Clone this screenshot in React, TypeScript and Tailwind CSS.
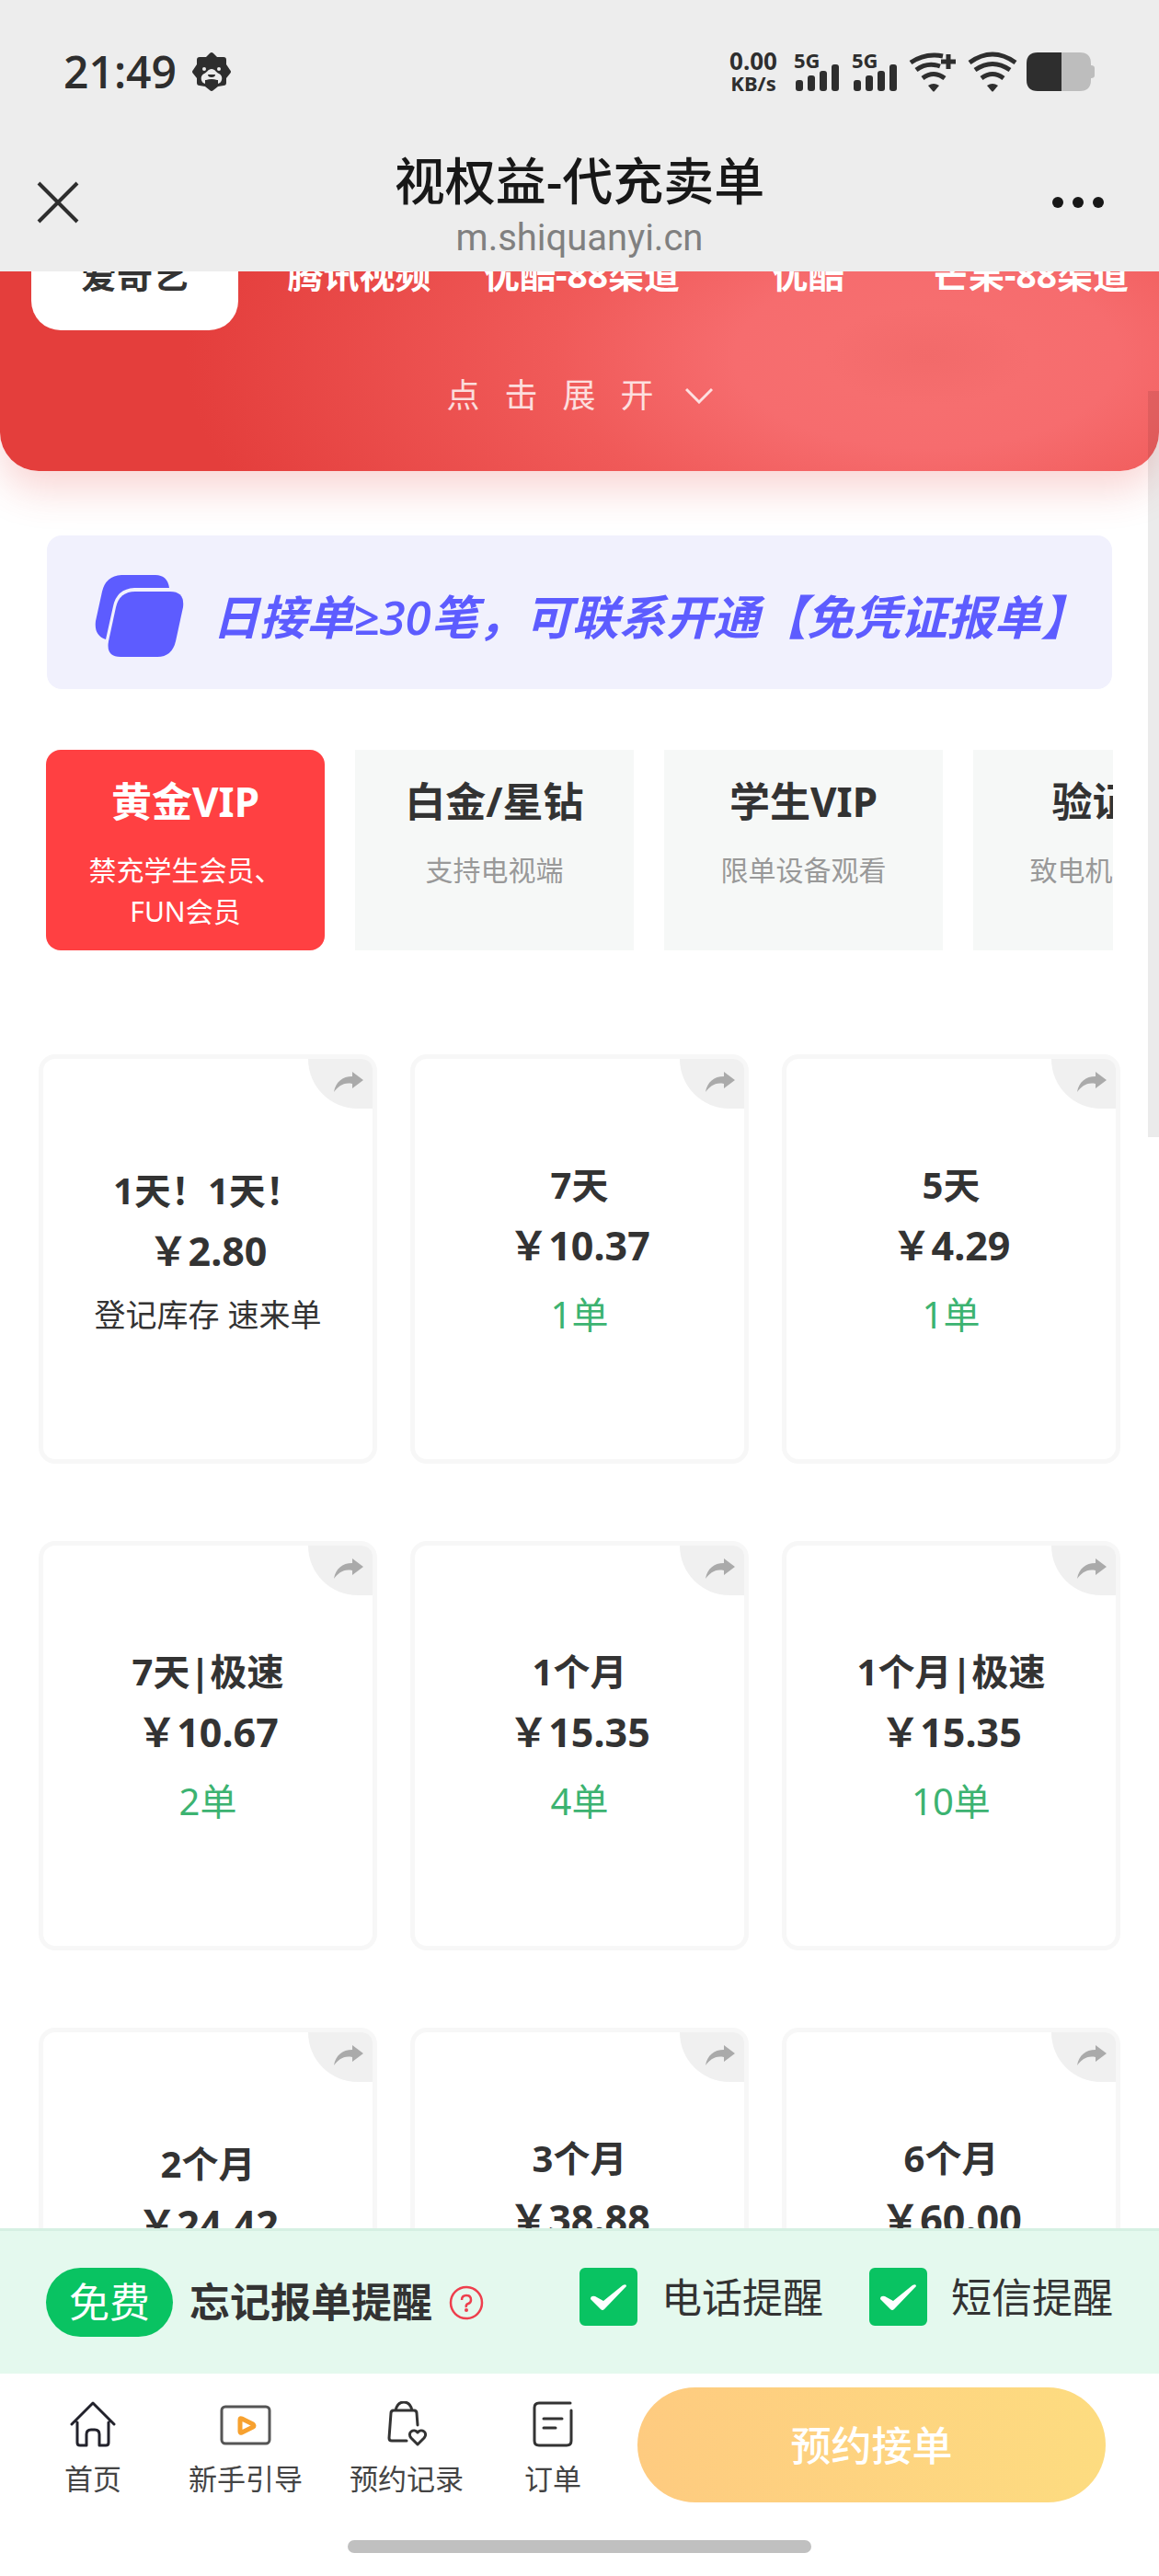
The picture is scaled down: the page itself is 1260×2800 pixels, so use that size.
import * as React from 'react';
import clsx from 'clsx';

interface Plan {
  name: string;
  price: string;
  orders?: string;
  note?: string;
}

interface Tier {
  title: string;
  desc: string;
}

const platforms = ['爱奇艺', '腾讯视频', '优酷-88渠道', '优酷', '芒果-88渠道'];

const tiers: Tier[] = [
  { title: '黄金VIP', desc: '禁充学生会员、FUN会员' },
  { title: '白金/星钻', desc: '支持电视端' },
  { title: '学生VIP', desc: '限单设备观看' },
  { title: '验证码', desc: '致电机主验证' },
];

const plans: Plan[] = [
  { name: '1天！1天！', price: '2.80', note: '登记库存 速来单' },
  { name: '7天', price: '10.37', orders: '1单' },
  { name: '5天', price: '4.29', orders: '1单' },
  { name: '7天|极速', price: '10.67', orders: '2单' },
  { name: '1个月', price: '15.35', orders: '4单' },
  { name: '1个月|极速', price: '15.35', orders: '10单' },
  { name: '2个月', price: '24.42', note: '登记库存 速来单' },
  { name: '3个月', price: '38.88', orders: '3单' },
  { name: '6个月', price: '60.00', orders: '2单' },
];

function LionIcon() {
  return (
    <svg viewBox="0 0 42 42" className="h-[42px] w-[42px]" aria-hidden="true">
      <path
        d="M19 1q2-2 4 0l4 4 7 0q3 0 3 3v5l4 6q2 2 0 4l-4 5v5q0 3-3 3l-6 1-5 4q-2 2-4 0l-5-4-6-1q-3 0-3-3v-5l-4-5q-2-2 0-4l4-6V8q0-3 3-3l7 0z"
        fill="#2e2e2e"
      />
      <path
        d="M21 18c4 0 5 4 8 5 5 2 4 10-1 11v-4H14v4c-5-1-6-9-1-11 3-1 4-5 8-5z"
        fill="#ededed"
      />
      <path d="M17 24h8q0 3-4 3t-4-3zM15 30q6-2 12 0l-2 9h-8z" fill="#2e2e2e" />
      <circle cx="13" cy="18" r="2" fill="#ededed" />
      <circle cx="29" cy="18" r="2" fill="#ededed" />
    </svg>
  );
}

function Signal() {
  return (
    <svg viewBox="0 0 50 44" className="h-11 w-[50px]" fill="#2e2e2e" role="img" aria-label="5G">
      <text x="0" y="18" fontSize="22" fontWeight="700" fontFamily="Noto Sans, sans-serif">
        5G
      </text>
      <rect x="2" y="31" width="8" height="12" rx="3" />
      <rect x="15" y="26" width="8" height="17" rx="3" />
      <rect x="28" y="21" width="8" height="22" rx="3" />
      <rect x="41" y="14" width="8" height="29" rx="3" />
    </svg>
  );
}

function Wifi({ plus }: { plus?: boolean }) {
  return (
    <svg viewBox="0 0 54 44" className="h-11 w-[54px]" fill="none" stroke="#2e2e2e" strokeWidth="5" aria-hidden="true">
      <path d={plus ? 'M2 12Q18 1 37 5' : 'M2 12Q27-6 52 12'} />
      <path d={plus ? 'M8 20Q20 11 34 16' : 'M8 20Q27 7 46 20'} />
      <path d="M15 29Q27 20 39 29" />
      <path d="M21 37Q27 33 33 37L28 43Q27 44 26 43z" fill="#2e2e2e" stroke="none" />
      {plus && <path d="M43 3v16M35 11h16" />}
    </svg>
  );
}

function Battery() {
  return (
    <svg viewBox="0 0 74 42" className="h-[42px] w-[74px]" aria-hidden="true">
      <path d="M38 0h20q12 0 12 12v2q4 0 4 3v8q0 3-4 3v2q0 12-12 12H38z" fill="#bdbdbd" />
      <path d="M38 0H12Q0 0 0 12v18q0 12 12 12h26z" fill="#2e2e2e" />
    </svg>
  );
}

function StatusBar() {
  return (
    <div className="flex items-center justify-between pt-[52px] pr-[70px] pl-[69px] text-[#2e2e2e]">
      <div className="flex items-center gap-[17px]">
        <span className="font-['Open_Sans',sans-serif] text-[48px] leading-[52px] font-semibold">21:49</span>
        <LionIcon />
      </div>
      <div className="flex items-center">
        <div className="mr-[18px] text-center leading-[24px] font-bold">
          <div className="text-[26px]">0.00</div>
          <div className="text-[22px]">KB/s</div>
        </div>
        <div className="flex gap-[13px]">
          <Signal />
          <Signal />
        </div>
        <div className="ml-3 flex items-center gap-[10px]">
          <Wifi plus />
          <Wifi />
          <Battery />
        </div>
      </div>
    </div>
  );
}

function TitleBar() {
  return (
    <div className="grid grid-cols-[1fr_auto_1fr] items-center px-[40px] pt-[53px]">
      <button type="button" aria-label="关闭" className="justify-self-start">
        <svg viewBox="0 0 46 46" className="h-[46px] w-[46px]" fill="none" stroke="#2e2e2e" strokeWidth="4">
          <path d="M2 2l42 42M44 2L2 44" />
        </svg>
      </button>
      <div className="text-center">
        <h1 className="text-[55px] leading-[78px] font-medium text-[#181818]">视权益-代充卖单</h1>
        <p className="font-['Roboto',sans-serif] text-[40px] leading-[48px] text-[#808080]">m.shiquanyi.cn</p>
      </div>
      <button type="button" aria-label="更多" className="mr-[19px] justify-self-end">
        <svg viewBox="0 0 58 46" className="h-[46px] w-[58px]" fill="#181818">
          <circle cx="7" cy="23" r="6" />
          <circle cx="29" cy="23" r="6" />
          <circle cx="51" cy="23" r="6" />
        </svg>
      </button>
    </div>
  );
}

function PlatformPanel() {
  return (
    <section className="-mt-[80px] rounded-b-[42px] bg-[radial-gradient(ellipse_64%_130%_at_80%_58%,#f26a6a_0%,#f66e6f_14%,#f66c6e_26%,#f05a59_50%,#e43e3c_100%)] pt-8 pb-[56px] shadow-[0_20px_44px_rgba(229,62,61,0.22)]">
      <div className="flex gap-[19px] overflow-hidden pl-[34px]">
        {platforms.map((name, i) => (
          <button
            key={name}
            type="button"
            className={clsx(
              'flex h-[112px] w-[225px] shrink-0 items-center rounded-[32px] px-1 pb-[10px] text-[39px] leading-[56px] font-bold whitespace-nowrap',
              i === 0 ? 'bg-white text-[#333]' : 'text-white',
              name.length < 6 && 'justify-center'
            )}
          >
            <span className="overflow-hidden">{name}</span>
          </button>
        ))}
      </div>
      <button type="button" className="mx-auto mt-[45px] flex items-center text-[36px] leading-[52px] text-white/80">
        <span className="flex gap-[27px]">
          <span>点</span>
          <span>击</span>
          <span>展</span>
          <span>开</span>
        </span>
        <svg viewBox="0 0 30 18" className="ml-[34px] h-[18px] w-[30px]" fill="none" stroke="currentColor" strokeWidth="3">
          <path d="M1 2l14 14L29 2" />
        </svg>
      </button>
    </section>
  );
}

function Banner() {
  return (
    <div className="mx-[51px] mt-[70px] flex h-[167px] items-center overflow-hidden rounded-[16px] bg-[#f1f1fd] pt-2 pl-[52px] text-[#5d5cff]">
      <svg viewBox="0 0 97 90" className="h-[90px] w-[97px] shrink-0" fill="currentColor" aria-hidden="true">
        <path d="M29 0H66Q79 0 81 14H43Q24 15 20 34L12 70Q-1 66 1 50L8 18Q12 1 29 0z" />
        <path d="M44 18H82Q98 18 96 35L88 72Q84 89 68 89H28Q12 89 15 72L23 35Q27 18 44 18z" />
      </svg>
      <p className="ml-[31px] font-['Open_Sans','Noto_Sans_CJK_SC',sans-serif] text-[51px] leading-[74px] font-semibold whitespace-nowrap italic">
        日接单≥30笔，可联系开通【免凭证报单】
      </p>
    </div>
  );
}

function TierTabs() {
  const [active, setActive] = React.useState(0);

  return (
    <div className="mx-[50px] mt-[66px] flex gap-[33px] overflow-hidden">
      {tiers.map((tier, i) => (
        <button
          key={tier.title}
          type="button"
          onClick={() => setActive(i)}
          className={clsx(
            'flex min-h-[218px] w-[303px] shrink-0 flex-col items-center px-9 pt-6',
            i === active ? 'rounded-[16px] bg-[#ff4042] text-white' : 'bg-[#f6f8f7] text-[#333]'
          )}
        >
          <span className="text-[44px] leading-[64px] font-bold">{tier.title}</span>
          <span className={clsx('mt-5 text-[30px] leading-[45px]', i !== active && 'text-[#999]')}>
            {tier.desc}
          </span>
        </button>
      ))}
    </div>
  );
}

function PlanCard({ plan }: { plan: Plan }) {
  return (
    <article className="relative flex h-[445px] flex-col items-center justify-center rounded-[18px] border-[5px] border-[#f7f7f7] pb-6 text-[#333]">
      <button
        type="button"
        aria-label="分享"
        className="absolute top-0 right-0 h-[54px] w-[70px] rounded-tr-[12px] rounded-bl-[54px] bg-[#f0f0f0]"
      >
        <svg viewBox="0 0 34 24" className="mb-1 ml-[27px] h-6 w-[34px]" fill="#aaa">
          <path d="M21 1l12 9-12 9v-5C11 12 6 17 1 23 3 12 10 6 21 6z" />
        </svg>
      </button>
      <h2 className="text-[40px] leading-[66px] font-bold">{plan.name}</h2>
      <p className="text-[43px] leading-[66px] font-bold">￥{plan.price}</p>
      {plan.orders && <p className="mt-3 text-[40px] leading-[60px] text-[#3cb371]">{plan.orders}</p>}
      {plan.note && <p className="mt-3 text-[34px] leading-[48px]">{plan.note}</p>}
    </article>
  );
}

function CheckOption({ label }: { label: string }) {
  return (
    <label className="flex items-center gap-[26px] text-[44px] leading-[62px] text-[#333]">
      <span className="relative block h-[63px] w-[63px]">
        <input
          type="checkbox"
          defaultChecked
          className="peer block h-full w-full appearance-none rounded-[6px] border-2 border-[#09c362] checked:bg-[#09c362]"
        />
        <svg
          viewBox="0 0 63 63"
          className="pointer-events-none absolute inset-0 hidden peer-checked:block"
          fill="#fff"
        >
          <path d="M12 34q0-4 5-3l9 5 21-17q4-2 4 1L27 45q-2 2-4 0z" />
        </svg>
      </span>
      {label}
    </label>
  );
}

function ReminderBar() {
  return (
    <div className="flex h-[158px] items-start justify-between border-t-[3px] border-[#d6f0e3] bg-[#e4f9ee] pt-10 pr-[50px] pl-[50px]">
      <div className="flex items-center">
        <span className="rounded-full bg-[#09c362] px-[25px] text-[44px] leading-[75px] text-white">免费</span>
        <span className="ml-[18px] text-[44px] leading-[75px] font-bold text-[#333]">忘记报单提醒</span>
        <button type="button" aria-label="说明" className="ml-[18px]">
          <svg viewBox="0 0 38 38" className="h-[38px] w-[38px]" fill="none" stroke="#ee3f4d" strokeWidth="2.5">
            <circle cx="19" cy="19" r="17" />
            <path d="M14 16q0-5 5-5t5 5q0 3-3 4t-2 4" />
            <circle cx="19" cy="27" r="2" fill="#ee3f4d" stroke="none" />
          </svg>
        </button>
      </div>
      <div className="flex gap-[50px]">
        <CheckOption label="电话提醒" />
        <CheckOption label="短信提醒" />
      </div>
    </div>
  );
}

function HomeIcon() {
  return (
    <svg viewBox="0 0 50 50" className="h-[50px] w-[50px]" fill="none" stroke="#22222c" strokeWidth="3" strokeLinecap="round" strokeLinejoin="round">
      <path d="M2 25L25 2l23 23M8 23v22q0 3 3 3h7V36q0-5 5-5h4q5 0 5 5v12h7q3 0 3-3V23" />
    </svg>
  );
}

function GuideIcon() {
  return (
    <svg viewBox="0 0 56 50" className="h-[50px] w-[56px]" fill="none" strokeLinejoin="round">
      <rect x="2" y="6" width="52" height="40" rx="4" stroke="#555" strokeWidth="3" />
      <path d="M22 20v13q0 2 2 1l12-6q2-1 0-3l-12-6q-2-1-2 1z" stroke="#f7a12f" strokeWidth="5" />
    </svg>
  );
}

function BagIcon() {
  return (
    <svg viewBox="0 0 44 50" className="h-[50px] w-[44px]" fill="none" stroke="#333" strokeWidth="3" strokeLinecap="round" strokeLinejoin="round">
      <path d="M22 43H6q-3 0-3-3l2-27q0-3 3-3h22q3 0 3 3l1 13M10 10q2-9 9-9t9 9" />
      <path d="M34 47l-7-7c-5-6 3-11 7-6 4-5 12 0 7 6z" />
    </svg>
  );
}

function OrderIcon() {
  return (
    <svg viewBox="0 0 44 50" className="h-[50px] w-[44px]" fill="none" stroke="#333" strokeWidth="3" strokeLinecap="round" strokeLinejoin="round">
      <path d="M41 2H7Q2 2 2 7v36q0 5 5 5h30q5 0 5-5V10M12 19h20M12 29h13" />
    </svg>
  );
}

const navItems = [
  { label: '首页', icon: <HomeIcon />, width: 'w-[134px]' },
  { label: '新手引导', icon: <GuideIcon />, width: 'w-[198px]' },
  { label: '预约记录', icon: <BagIcon />, width: 'w-[152px]' },
  { label: '订单', icon: <OrderIcon />, width: 'w-[166px]' },
];

function BottomNav() {
  return (
    <nav className="flex items-start bg-white pt-[15px] pr-[58px] pl-[34px]">
      {navItems.map(item => (
        <a key={item.label} href="#" className={clsx('flex shrink-0 flex-col items-center pt-[15px]', item.width)}>
          {item.icon}
          <span className="mt-3 text-[31px] leading-[44px] whitespace-nowrap text-[#444]">{item.label}</span>
        </a>
      ))}
      <button
        type="button"
        className="ml-[9px] h-[125px] flex-1 rounded-full bg-linear-to-r from-[#fecb80] to-[#fddc80] text-[44px] font-medium text-white"
      >
        预约接单
      </button>
    </nav>
  );
}

export default function App() {
  return (
    <div className="flex h-screen flex-col overflow-hidden bg-white font-['Noto_Sans','Noto_Sans_CJK_SC',sans-serif]">
      <header className="z-10 h-[295px] shrink-0 bg-[#ededed]">
        <StatusBar />
        <TitleBar />
      </header>
      <main className="relative min-h-0 flex-1 overflow-hidden">
        <PlatformPanel />
        <Banner />
        <TierTabs />
        <div className="mt-[113px] grid grid-cols-3 gap-x-[36px] gap-y-[84px] px-[42px]">
          {plans.map((plan, i) => (
            <PlanCard key={i} plan={plan} />
          ))}
        </div>
        <div className="absolute top-[130px] right-0 h-[811px] w-3 bg-black/8" />
      </main>
      <footer className="z-10 shrink-0 bg-white">
        <ReminderBar />
        <BottomNav />
        <div className="mx-auto mt-[41px] mb-[25px] h-[14px] w-2/5 rounded-full bg-[#c0c0c0]" />
      </footer>
    </div>
  );
}
